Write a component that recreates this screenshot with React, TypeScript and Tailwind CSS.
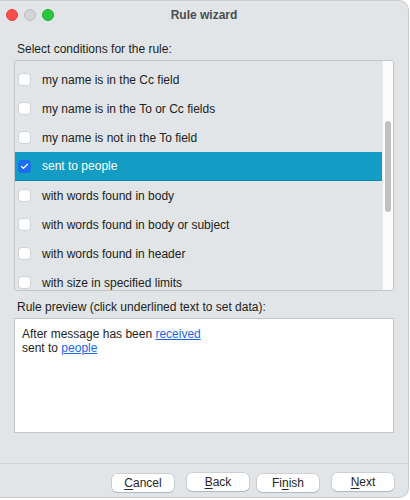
import { Check } from 'lucide-react'

const conditions = [
  'my name is in the Cc field',
  'my name is in the To or Cc fields',
  'my name is not in the To field',
  'sent to people',
  'with words found in body',
  'with words found in body or subject',
  'with words found in header',
  'with size in specified limits',
]

function Btn({ label, u }: { label: string; u: number }) {
  return (
    <button className="w-[62px] h-[18px] rounded-[5px] bg-white shadow-[0_0_0_0.5px_rgba(0,0,0,0.18),0_1px_1px_rgba(0,0,0,0.12)] text-[12px] leading-[18px] text-[#262626]">
      {label.slice(0, u)}
      <span className="underline underline-offset-2">{label[u]}</span>
      {label.slice(u + 1)}
    </button>
  )
}

export default function App() {
  return (
    <div className="w-[410px] h-[500px] bg-white font-['Liberation_Sans',Arial,sans-serif]">
      <div className="w-[409px] h-[498px] bg-[#e1e5e7] rounded-tr-[10px] rounded-br-[10px] border-t border-r border-b border-[#c9cccf] flex flex-col">
        <div className="h-[28px] flex items-center relative">
          <div className="flex gap-[6px] pl-[6px]">
            <span className="w-[12px] h-[12px] rounded-full bg-[#fd4f4b] border border-[#e0423d]" />
            <span className="w-[12px] h-[12px] rounded-full bg-[#d3d5d7] border border-[#bcbfc1]" />
            <span className="w-[12px] h-[12px] rounded-full bg-[#2ac63f] border border-[#1fae33]" />
          </div>
          <div className="absolute inset-0 flex items-center justify-center text-[12px] font-bold text-[#4b4d4f]">
            Rule wizard
          </div>
        </div>

        <div className="px-[14px] pt-[13px]">
          <div className="pl-[3px] text-[12px] leading-[14px] text-[#1e1e1e]">Select conditions for the rule:</div>
          <div className="mt-[4px] h-[231px] border border-[#c3c6c8] rounded-[3px] flex overflow-hidden">
            <div className="flex-1 overflow-hidden pt-[4px]">
              {conditions.map((c, i) => {
                const sel = i === 3
                return (
                  <div
                    key={c}
                    className={`h-[29px] flex items-center shrink-0 ${sel ? 'bg-[#139dc4] border-b border-[#0c89b2] text-white' : 'text-[#222]'}`}
                  >
                    <div
                      className={`ml-[3px] w-[13px] h-[13px] rounded-[4px] flex items-center justify-center ${sel ? 'bg-[#1a6cf0]' : 'bg-white border border-[#cfd2d4]'}`}
                    >
                      {sel && <Check className="w-[9px] h-[9px] text-white" strokeWidth={3.5} />}
                    </div>
                    <span className="ml-[11px] text-[12px]">{c}</span>
                  </div>
                )
              })}
            </div>
            <div className="w-[11px] bg-[#fbfbfb] border-l border-[#e9e9e9] relative">
              <div className="absolute left-[2px] top-[60px] w-[6px] h-[91px] rounded-full bg-[#c1c1c1]" />
            </div>
          </div>

          <div className="mt-[9px] pl-[3px] text-[12px] leading-[14px] text-[#1e1e1e]">
            Rule preview (click underlined text to set data):
          </div>
          <div className="mt-[4px] w-[380px] h-[115px] bg-white border border-[#c3c6c8] px-[7px] pt-[8px] text-[12px] leading-[14px] text-[#1e1e1e]">
            <div>
              After message has been{' '}
              <span className="text-[#1a66e8] underline">received</span>
            </div>
            <div>
              sent to <span className="text-[#1a66e8] underline">people</span>
            </div>
          </div>
        </div>

        <div className="mt-auto border-t border-[#d1d4d6] h-[34px] flex items-center justify-end gap-[8px] pr-[14px] pt-[2px]">
          <div className="mr-[5px]">
            <Btn label="Cancel" u={0} />
          </div>
          <Btn label="Back" u={0} />
          <div className="mr-[5px]">
            <Btn label="Finish" u={2} />
          </div>
          <Btn label="Next" u={0} />
        </div>
      </div>
    </div>
  )
}
